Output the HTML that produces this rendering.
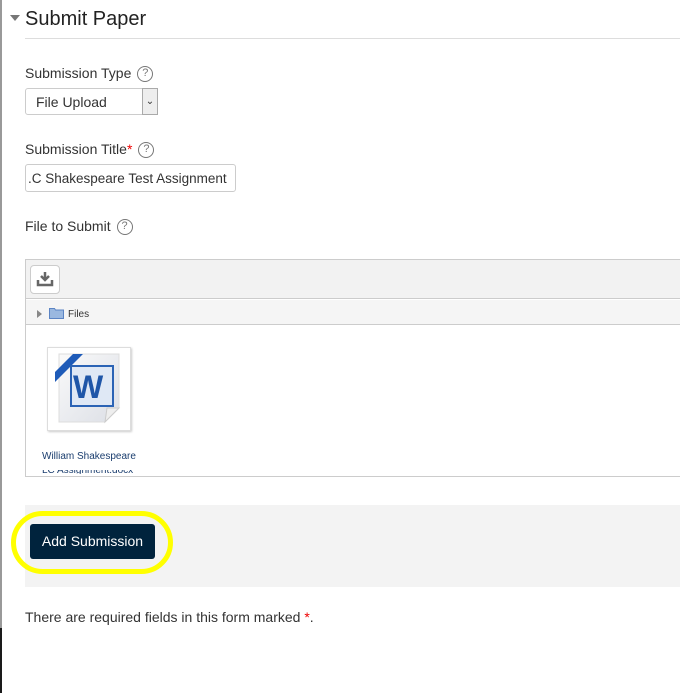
<!DOCTYPE html>
<html><head><meta charset="utf-8"><style>
*{margin:0;padding:0;box-sizing:border-box}
body{width:680px;height:693px;overflow:hidden;background:#fff;font-family:"Liberation Sans",Arial,sans-serif;color:#333;position:relative}
.abs{position:absolute}
.lbl{font-size:14px;color:#333}
.help{display:inline-block;width:16px;height:16px;border:1.3px solid #777;border-radius:50%;font-size:11px;line-height:13px;text-align:center;color:#777;vertical-align:middle;margin-left:6px}
</style></head><body>
<div class="abs" style="left:0;top:0;width:2px;height:628px;background:#999"></div>
<div class="abs" style="left:0;top:628px;width:2px;height:65px;background:#1a1a1a"></div>
<div class="abs" style="left:10px;top:15px;width:0;height:0;border-left:5px solid transparent;border-right:5px solid transparent;border-top:6px solid #777"></div>
<div class="abs" style="left:25px;top:8px;font-size:20px;color:#222">Submit Paper</div>
<div class="abs" style="left:25px;top:38px;width:655px;height:1px;background:#ddd"></div>

<div class="abs lbl" style="left:25px;top:65px">Submission Type<span class="help">?</span></div>
<div class="abs" style="left:25px;top:88px;width:133px;height:27px;border:1px solid #ccc;border-radius:3px;font-size:14px;padding:5px 0 0 10px;color:#333">File Upload</div>
<div class="abs" style="left:142px;top:88px;width:16px;height:27px;border:1px solid #aaa;background:#eee;font-size:10px;text-align:center;line-height:25px;color:#333">&#8964;</div>

<div class="abs lbl" style="left:25px;top:141px">Submission Title<span style="color:#e00">*</span><span class="help">?</span></div>
<div class="abs" style="left:25px;top:164px;width:211px;height:28px;border:1px solid #ccc;border-radius:3px;font-size:13.5px;padding:6px 0 0 2px;color:#333;white-space:nowrap;overflow:hidden">.C Shakespeare Test Assignment</div>

<div class="abs lbl" style="left:25px;top:218px">File to Submit<span class="help">?</span></div>

<div class="abs" style="left:25px;top:259px;width:660px;height:218px;border:1px solid #ccc"></div>
<div class="abs" style="left:26px;top:260px;width:654px;height:39px;background:#f2f2f2;border-bottom:1px solid #ccc"></div>
<div class="abs" style="left:30px;top:265px;width:30px;height:29px;background:#fff;border:1px solid #ccc;border-radius:4px">
<svg width="28" height="27" viewBox="0 0 28 27"><path d="M14 6v8M10 10l4 4 4-4" stroke="#666" stroke-width="2.5" fill="none"/><path d="M7 14v5h14v-5" stroke="#666" stroke-width="2.5" fill="none"/></svg></div>
<div class="abs" style="left:26px;top:300px;width:654px;height:25px;background:#f5f5f5;border-bottom:1px solid #ccc"></div>
<div class="abs" style="left:37px;top:310px;width:0;height:0;border-top:4px solid transparent;border-bottom:4px solid transparent;border-left:5px solid #888"></div>
<svg class="abs" style="left:49px;top:307px" width="15" height="12" viewBox="0 0 15 12"><path d="M0.5 1.5h5l1 1.5h8v8.5h-14z" fill="#9ab8e0" stroke="#5b84c4"/></svg>
<div class="abs" style="left:68px;top:309px;font-size:10px;color:#333">Files</div>

<div class="abs" style="left:47px;top:347px;width:84px;height:84px;border:1px solid #ddd;background:#fff;box-shadow:1px 1px 2px #ccc"></div>
<svg class="abs" style="left:53px;top:350px" width="74" height="78" viewBox="0 0 74 78">
<defs><linearGradient id="g" x1="0" y1="0" x2="1" y2="1"><stop offset="0" stop-color="#fafafa"/><stop offset="1" stop-color="#dcdfe6"/></linearGradient></defs>
<path d="M6 4h60v54l-14 14H6z" fill="url(#g)" stroke="#ddd"/>
<path d="M52 72l2-14h12z" fill="#eee" stroke="#ccc"/>
<path d="M2 22L20 4h10L2 32z" fill="#1e5bb8"/>
<rect x="18" y="16" width="42" height="40" fill="#dfe8f5" stroke="#2b63b5" stroke-width="2"/>
<text x="20" y="48" font-family="Liberation Sans" font-weight="bold" font-size="32" fill="#1f56a8">W</text>
</svg>
<div class="abs" style="left:42px;top:451px;font-size:10px;color:#1a3d6e">William Shakespeare</div>
<div class="abs" style="left:42px;top:470px;width:100px;height:4px;overflow:hidden;font-size:10px;color:#1a3d6e;line-height:1px">LC Assignment.docx</div>

<div class="abs" style="left:25px;top:505px;width:655px;height:82px;background:#f3f3f3"></div>
<div class="abs" style="left:11px;top:511px;width:162px;height:63px;border:5px solid #ff0;border-radius:32px"></div>
<div class="abs" style="left:30px;top:524px;width:125px;height:35px;background:#00233d;border-radius:3px;color:#fff;font-size:14px;text-align:center;line-height:35px">Add Submission</div>

<div class="abs lbl" style="left:25px;top:609px">There are required fields in this form marked <span style="color:#e00">*</span>.</div>
</body></html>
